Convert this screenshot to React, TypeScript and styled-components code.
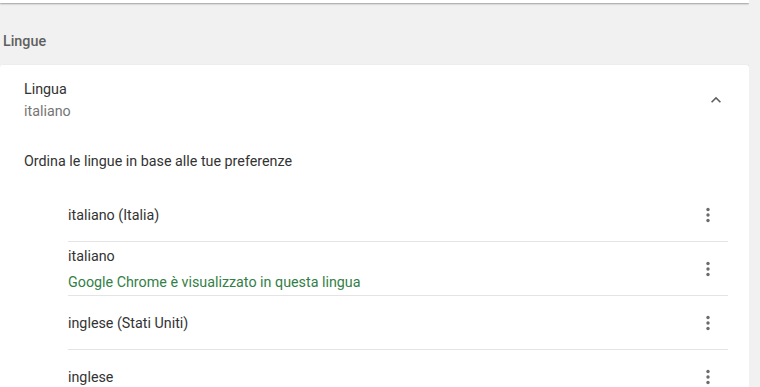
import React from 'react';
import styled, { createGlobalStyle } from 'styled-components';

const GlobalStyle = createGlobalStyle`
  html, body {
    margin: 0;
    padding: 0;
    background: #f1f1f1;
    font-family: Roboto, 'Noto Sans', Arial, sans-serif;
    font-size: 14.3px;
    color: #333;
    overflow: hidden;
  }
`;

const Pagina = styled.div`
  width: 749px;
  height: 387px;
  overflow: hidden;
`;

const CardPrecedente = styled.div`
  height: 3px;
  background: #fff;
  box-shadow: 0 1px 2px rgba(0, 0, 0, 0.35);
`;

const TitoloSezione = styled.h2`
  margin: 0;
  padding: 28px 0 0 3px;
  height: 34px;
  line-height: 20px;
  font-size: 14.3px;
  font-weight: 500;
  color: #5f5f5f;
`;

const Card = styled.section`
  background: #fff;
  box-shadow: 0 1px 2px rgba(0, 0, 0, 0.2), 1px 0 1px rgba(0, 0, 0, 0.08);
  border-radius: 2px;
`;

const Intestazione = styled.div`
  display: flex;
  align-items: center;
  padding: 13px 22px 0 24px;
`;

const BloccoTesto = styled.div`
  flex: 1;
  display: flex;
  flex-direction: column;
`;

const Etichetta = styled.div`
  line-height: 22px;
  color: #333;
`;

const Secondario = styled.div`
  line-height: 22px;
  color: #757575;
`;

const BottoneIcona = styled.button`
  width: 22px;
  height: 22px;
  padding: 0;
  border: none;
  background: none;
  display: flex;
  align-items: center;
  justify-content: center;
  color: #5f5f5f;
`;

const Descrizione = styled.p`
  margin: 0;
  padding: 28px 24px 0;
  line-height: 22px;
  color: #333;
`;

const Lista = styled.ul`
  list-style: none;
  margin: 16px 21px 0 68px;
  padding: 0;
`;

const Riga = styled.li<{ $ultima?: boolean }>`
  display: flex;
  align-items: center;
  box-sizing: border-box;
  min-height: 54px;
  border-bottom: ${(p) => (p.$ultima ? 'none' : '1px solid #e4e4e4')};
`;

const TestoRiga = styled.div`
  flex: 1;
  display: flex;
  flex-direction: column;
  gap: 6px;
  line-height: 20px;
`;

const Nota = styled.span`
  color: #338047;
`;

const Menu = styled.span`
  display: flex;
  margin-right: 8px;
`;

const Chevron = () => (
  <svg width="20" height="20" viewBox="0 0 24 24">
    <path d="M7.41 15.41 12 10.83l4.59 4.58L18 14l-6-6-6 6z" fill="currentColor" />
  </svg>
);

const Puntini = () => (
  <Menu>
    <svg width="24" height="24" viewBox="0 0 24 24">
      <circle cx="12" cy="6.5" r="1.7" fill="#6b6b6b" />
      <circle cx="12" cy="12" r="1.7" fill="#6b6b6b" />
      <circle cx="12" cy="17.5" r="1.7" fill="#6b6b6b" />
    </svg>
  </Menu>
);

const lingue = [
  { nome: 'italiano (Italia)' },
  { nome: 'italiano', nota: 'Google Chrome è visualizzato in questa lingua' },
  { nome: 'inglese (Stati Uniti)' },
  { nome: 'inglese' },
];

const App: React.FC = () => (
  <>
    <GlobalStyle />
    <Pagina>
      <CardPrecedente />
      <TitoloSezione>Lingue</TitoloSezione>
      <Card>
        <Intestazione>
          <BloccoTesto>
            <Etichetta>Lingua</Etichetta>
            <Secondario>italiano</Secondario>
          </BloccoTesto>
          <BottoneIcona aria-label="Comprimi">
            <Chevron />
          </BottoneIcona>
        </Intestazione>
        <Descrizione>Ordina le lingue in base alle tue preferenze</Descrizione>
        <Lista>
          {lingue.map((l, i) => (
            <Riga key={l.nome} $ultima={i === lingue.length - 1}>
              <TestoRiga>
                <span>{l.nome}</span>
                {l.nota && <Nota>{l.nota}</Nota>}
              </TestoRiga>
              <Puntini />
            </Riga>
          ))}
        </Lista>
      </Card>
    </Pagina>
  </>
);

export default App;
